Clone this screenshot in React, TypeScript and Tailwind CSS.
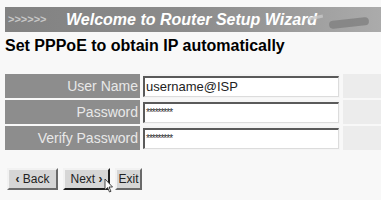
import React from "react";

function Row({ label, children }: { label: string; children: React.ReactNode }) {
  return (
    <div className="flex h-[24px] gap-[3px]">
      <div className="w-[135px] bg-[#8d8d8d] text-[#e8e8e8] text-[14px] leading-[24px] text-right pr-[2px]">
        {label}
      </div>
      <div className="w-[197px] bg-[#f4f4f4] flex items-center">{children}</div>
      <div className="flex-1 bg-[#ececec]" />
    </div>
  );
}

function Field({ value, small }: { value: string; small?: boolean }) {
  return (
    <div className="h-[21px] w-[196px] bg-white border-t-2 border-l-2 border-[#5a5a5a] border-r border-b border-r-[#dcdcdc] border-b-[#dcdcdc] flex items-center pl-[1px]">
      <span className={small ? "text-[10px] tracking-[-1px] text-[#333] leading-none" : "text-[13px] text-[#222] leading-none"}>
        {value}
      </span>
    </div>
  );
}

function Btn({ children, focus, w }: { children: React.ReactNode; focus?: boolean; w: string }) {
  return (
    <div
      className={
        w +
        " h-[22px] bg-[#d6d6d6] text-[12px] text-[#222] leading-[18px] text-center border-2 border-t-[#f2f2f2] border-l-[#f2f2f2] " +
        (focus ? "border-r-[#202020] border-b-[#202020]" : "border-r-[#6a6a6a] border-b-[#6a6a6a]")
      }
    >
      {children}
    </div>
  );
}

export default function App() {
  return (
    <div className="w-[381px] h-[200px] bg-[#f8f8f8] overflow-hidden relative" style={{ fontFamily: '"Liberation Sans", Arial, sans-serif' }}>
      <div className="pt-[7px] pl-[5px]">
        <div className="h-[25px] flex items-center bg-gradient-to-r from-[#828282] via-[#8c8c8c] to-[#ababab] relative overflow-hidden">
          <span className="text-[#c8c8c8] text-[11px] font-bold pl-[3px] w-[61px]">&gt;&gt;&gt;&gt;&gt;&gt;</span>
          <span className="text-white italic font-bold text-[16px]">Welcome to Router Setup Wizard</span>
          <div className="absolute right-[12px] top-[12px] w-[40px] h-[8px] bg-[#7a7a7a] rounded-full opacity-70 -rotate-6" />
          <div className="absolute right-[58px] top-[9px] w-[14px] h-[3px] bg-[#c8c8c8] opacity-80 -rotate-12" />
        </div>
        <div className="mt-[5px] text-[16px] font-bold text-black leading-[17px]">Set PPPoE to obtain IP automatically</div>
        <div className="mt-[20px] flex flex-col gap-[2px]">
          <Row label="User Name">
            <Field value="username@ISP" />
          </Row>
          <Row label="Password">
            <Field value="*********" small />
          </Row>
          <Row label="Verify Password">
            <Field value="*********" small />
          </Row>
        </div>
        <div className="mt-[18px] pl-[2px] flex gap-[5px]">
          <Btn w="w-[51px]"><span className="font-bold">‹</span> Back</Btn>
          <Btn w="w-[47px]" focus>Next <span className="font-bold">›</span></Btn>
          <Btn w="w-[27px]">Exit</Btn>
        </div>
      </div>
      <svg className="absolute left-[104px] top-[178px]" width="10" height="16" viewBox="0 0 10 16">
        <path d="M1 1 L1 12 L3.5 9.5 L5.5 14 L7 13.3 L5 9 L8.5 9 Z" fill="white" stroke="#333" strokeWidth="0.9" />
      </svg>
    </div>
  );
}
